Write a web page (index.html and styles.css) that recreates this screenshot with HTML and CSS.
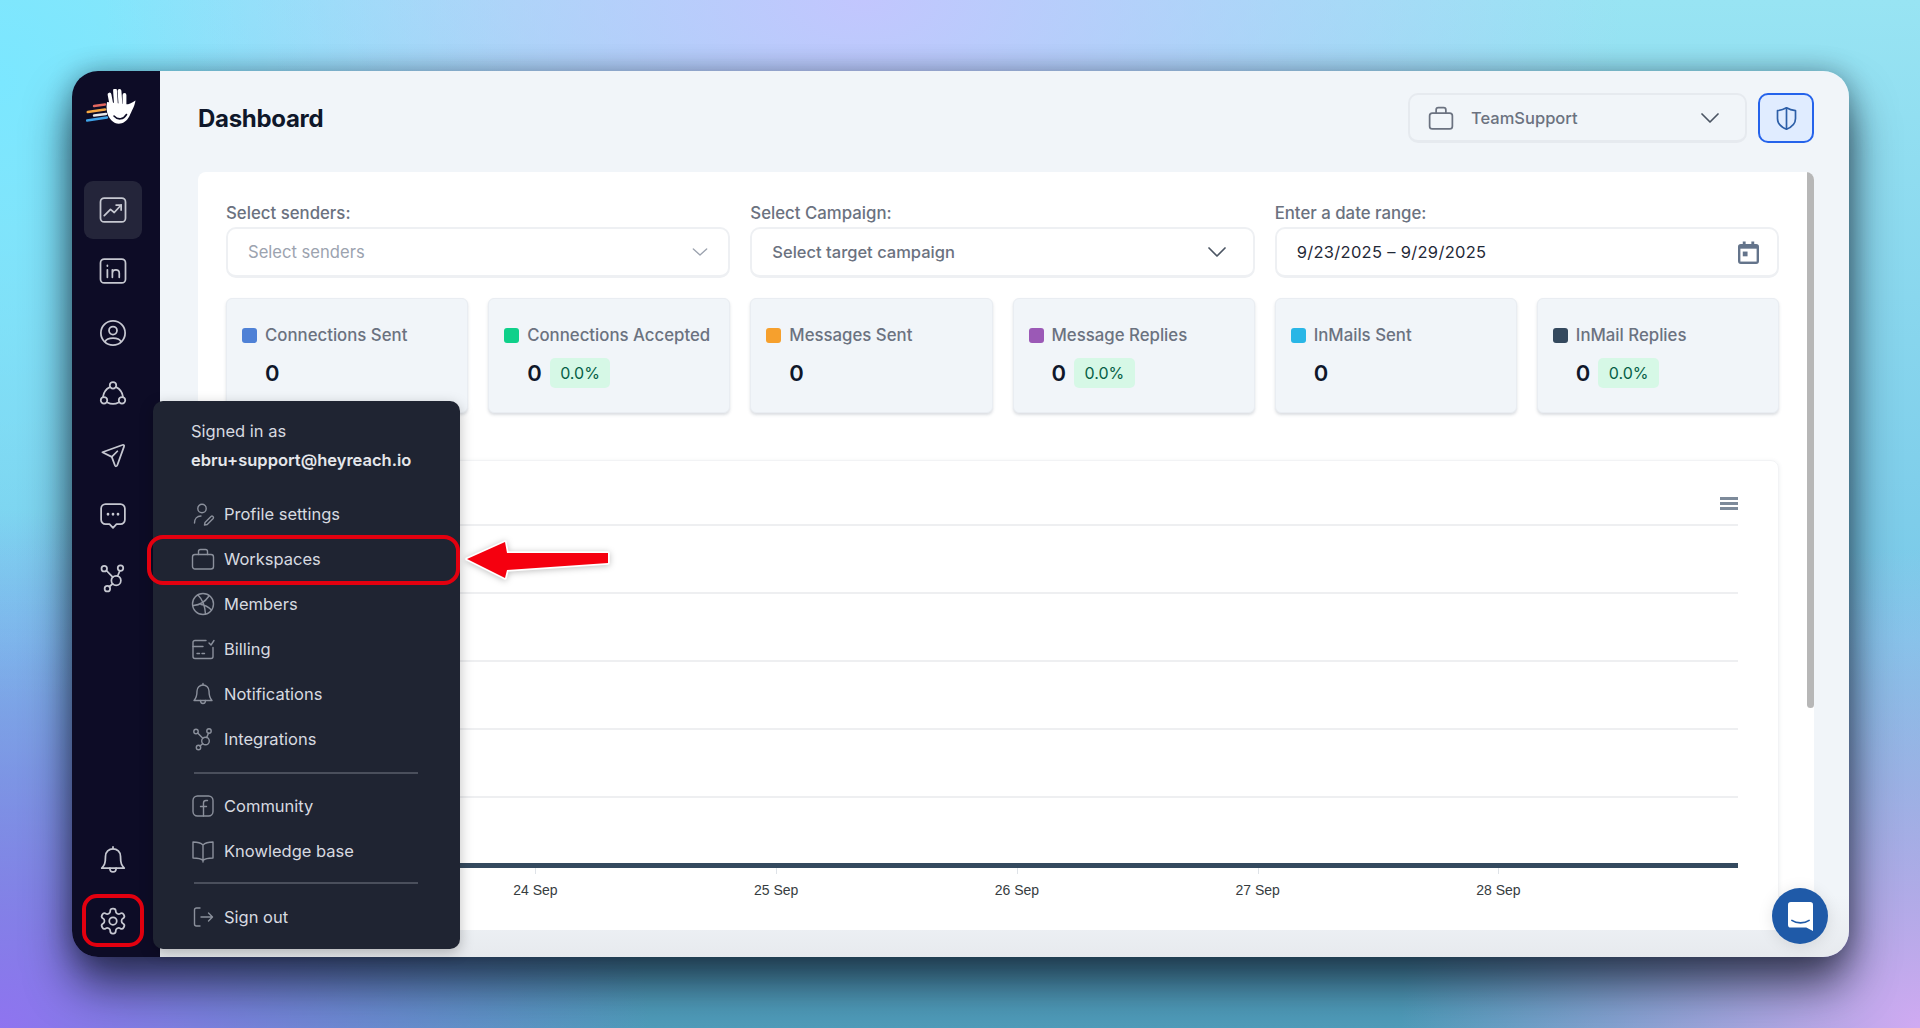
FILE: index.html
```html
<!DOCTYPE html>
<html lang="en">
<head>
<meta charset="UTF-8">
<meta name="viewport" content="width=device-width, initial-scale=1.0">
<title>Dashboard</title>
<link rel="stylesheet" href="styles.css">
</head>
<body>
<div class="window">

  <!-- left rail -->
  <aside class="sidebar">
    <svg class="logo" viewBox="0 0 51 36">
      <g fill="none" stroke-width="2.400" stroke-linecap="round">
        <path d="M8 17 19 15.500" stroke="#e2675f"/>
        <path d="M1.700 23 19 20.500" stroke="#f5a742"/>
        <path d="M8 26.500 20 25" stroke="#e8e8e8"/>
        <path d="M1 31.500 21 28.500" stroke="#3fa3e8"/>
      </g>
      <path d="M21 13 38 15C41 16 44 15 49.500 11.500 48.500 18 45.500 22 43.500 27 40 34 34 36 29 34 24 31 19 25 21 13Z" fill="#fff"/>
      <g stroke="#fff" stroke-width="3.800" stroke-linecap="round">
        <path d="M25.500 16 23.500 5.500"/>
        <path d="M30 16 29 1.500"/>
        <path d="M34.500 16 33.500 2"/>
        <path d="M38.500 17 38.500 6"/>
      </g>
      <path d="M28 27C32 31.500 37.500 30.500 40.500 25.500" fill="none" stroke="#0d0c26" stroke-width="1.600" stroke-linecap="round"/>
    </svg>

    <nav class="rail-nav">
      <a class="rail-item active">
        <svg viewBox="0 0 24 24"><rect x="2" y="2.500" width="20" height="19" rx="3"/><path d="M5 16.500l5-5 3 2.500 5.500-6"/><path d="M14.500 8h4v4"/></svg>
      </a>
      <a class="rail-item">
        <svg viewBox="0 0 24 24"><rect x="2" y="2.500" width="20" height="19" rx="3"/><path d="M7.500 11v6M7.500 7.500v.5M11.500 17v-6M11.500 13.500c0-3 5.500-3.500 5.500 0V17"/></svg>
      </a>
      <a class="rail-item">
        <svg viewBox="0 0 24 24"><circle cx="12" cy="12" r="9.700"/><circle cx="12" cy="10" r="3.200"/><path d="M5.800 18.800c1.500-3.500 10.900-3.500 12.400 0"/></svg>
      </a>
      <a class="rail-item">
        <svg viewBox="0 0 24 24"><circle cx="12" cy="5" r="2.600"/><circle cx="4.800" cy="17" r="2.600"/><circle cx="19.200" cy="17" r="2.600"/><path d="M9.500 6.500C6.500 8 4.500 10.500 4 14.300M14.500 6.500c3 1.500 5 4 5.500 7.800M7.500 18.800c3 1.500 6 1.500 9 0"/></svg>
      </a>
      <a class="rail-item">
        <svg viewBox="0 0 24 24"><path d="M3.500 9.800 19.500 4c1-.4 1.700.3 1.300 1.300L15.500 20c-.5 1.300-1.500 1.300-2 .2L11 13.500Z"/><path d="M11 13.500 15.500 9"/></svg>
      </a>
      <a class="rail-item">
        <svg viewBox="0 0 24 24"><path d="M6 2.500h12a3.500 3.500 0 0 1 3.500 3.500v9a3.500 3.500 0 0 1-3.500 3.500h-3.200L12 21.500l-2.800-3H6A3.500 3.500 0 0 1 2.500 15V6A3.500 3.500 0 0 1 6 2.500z"/><path d="M8 10.500v.1M12 10.500v.1M16 10.500v.1" stroke-width="2.200"/></svg>
      </a>
      <a class="rail-item">
        <svg viewBox="0 0 24 24"><use href="#ic-branch"/></svg>
      </a>
    </nav>

    <div class="rail-bottom">
      <a class="rail-item">
        <svg viewBox="0 0 24 24"><use href="#ic-bell"/></svg>
      </a>
      <a class="rail-item marked">
        <svg viewBox="0 0 24 24"><path d="M12.220 2h-.44a2 2 0 0 0-2 2v.18a2 2 0 0 1-1 1.730l-.43.25a2 2 0 0 1-2 0l-.15-.08a2 2 0 0 0-2.730.73l-.22.38a2 2 0 0 0 .73 2.730l.15.1a2 2 0 0 1 1 1.720v.51a2 2 0 0 1-1 1.740l-.15.09a2 2 0 0 0-.73 2.730l.22.38a2 2 0 0 0 2.730.73l.15-.08a2 2 0 0 1 2 0l.43.25a2 2 0 0 1 1 1.730V20a2 2 0 0 0 2 2h.44a2 2 0 0 0 2-2v-.18a2 2 0 0 1 1-1.730l.43-.25a2 2 0 0 1 2 0l.15.08a2 2 0 0 0 2.730-.73l.22-.39a2 2 0 0 0-.73-2.730l-.15-.08a2 2 0 0 1-1-1.740v-.5a2 2 0 0 1 1-1.740l.15-.09a2 2 0 0 0 .73-2.730l-.22-.38a2 2 0 0 0-2.730-.73l-.15.08a2 2 0 0 1-2 0l-.43-.25a2 2 0 0 1-1-1.730V4a2 2 0 0 0-2-2z"/><circle cx="12" cy="12" r="3"/></svg>
      </a>
    </div>
  </aside>

  <!-- main area -->
  <main class="main">
    <header class="topbar">
      <h1>Dashboard</h1>
      <div class="topbar-right">
        <div class="workspace-select">
          <svg class="ws-icon" viewBox="0 0 24 24"><use href="#ic-case"/></svg>
          <span>TeamSupport</span>
          <svg class="chevron dark" viewBox="0 0 18 10"><path d="M1 1l8 8 8-8"/></svg>
        </div>
        <button class="shield-btn">
          <svg viewBox="0 0 24 24"><path d="M12 2.500c2.500 1.500 5 2.200 8 2.500v7c0 4.500-3 7.500-8 9.500-5-2-8-5-8-9.500V5c3-.3 5.500-1 8-2.500z"/><path d="M12 2.500v19"/></svg>
        </button>
      </div>
    </header>

    <section class="content">
      <div class="filters">
        <div class="field">
          <label>Select senders:</label>
          <div class="select placeholder">
            <span>Select senders</span>
            <svg class="chevron light" viewBox="0 0 18 10"><path d="M1.500 1.500 9 8.500l7.500-7"/></svg>
          </div>
        </div>
        <div class="field">
          <label>Select Campaign:</label>
          <div class="select">
            <span>Select target campaign</span>
            <svg class="chevron dark" viewBox="0 0 18 10"><path d="M1 1l8 8 8-8"/></svg>
          </div>
        </div>
        <div class="field">
          <label>Enter a date range:</label>
          <div class="select date">
            <span>9/23/2025 – 9/29/2025</span>
            <svg class="calendar" viewBox="0 0 22 24"><path d="M3 3h2V0.500h3V3h6V0.500h3V3h2a3 3 0 0 1 3 3v15a3 3 0 0 1-3 3H3a3 3 0 0 1-3-3V6a3 3 0 0 1 3-3z"/><rect x="2.500" y="8" width="17" height="13.500" fill="#fff"/><rect x="5" y="11" width="5" height="5"/></svg>
          </div>
        </div>
      </div>

      <div class="stats">
        <div class="stat">
          <div class="stat-title"><i class="dot blue"></i>Connections Sent</div>
          <div class="stat-value"><b>0</b></div>
        </div>
        <div class="stat">
          <div class="stat-title"><i class="dot green"></i>Connections Accepted</div>
          <div class="stat-value"><b>0</b><span class="pct">0.0%</span></div>
        </div>
        <div class="stat">
          <div class="stat-title"><i class="dot orange"></i>Messages Sent</div>
          <div class="stat-value"><b>0</b></div>
        </div>
        <div class="stat">
          <div class="stat-title"><i class="dot purple"></i>Message Replies</div>
          <div class="stat-value"><b>0</b><span class="pct">0.0%</span></div>
        </div>
        <div class="stat">
          <div class="stat-title"><i class="dot cyan"></i>InMails Sent</div>
          <div class="stat-value"><b>0</b></div>
        </div>
        <div class="stat">
          <div class="stat-title"><i class="dot navy"></i>InMail Replies</div>
          <div class="stat-value"><b>0</b><span class="pct">0.0%</span></div>
        </div>
      </div>

      <div class="chart-card">
        <div class="chart-menu"><i></i><i></i><i></i></div>
        <div class="chart-grid">
          <div></div><div></div><div></div><div></div><div></div>
        </div>
        <div class="chart-axis"></div>
        <div class="chart-labels">
          <span>24 Sep</span><span>25 Sep</span><span>26 Sep</span><span>27 Sep</span><span>28 Sep</span>
        </div>
      </div>

      <div class="scrollbar"></div>
    </section>
  </main>

  <!-- account popup -->
  <div class="account-menu">
    <div class="account-head">
      <div>Signed in as</div>
      <div class="email">ebru+support@heyreach.io</div>
    </div>
    <a class="menu-item">
      <svg viewBox="0 0 24 24"><circle cx="11" cy="6.500" r="4.200"/><path d="M3.500 21c0-4 2.500-7 6.500-7"/><path d="M14 20.500l6-6a1.500 1.500 0 0 1 2.200 2l-6 6-2.700.5z"/></svg>
      Profile settings
    </a>
    <a class="menu-item marked">
      <svg viewBox="0 0 24 24"><use href="#ic-case"/></svg>
      Workspaces
    </a>
    <a class="menu-item">
      <svg viewBox="0 0 24 24"><circle cx="12" cy="12" r="10.500"/><path d="M7 3c4 4 7 10 7.500 19M18 4c-4 6-9 9-15.500 9.500M10 12.500c4 .5 8 3 10.500 5.500"/></svg>
      Members
    </a>
    <a class="menu-item">
      <svg viewBox="0 0 24 24"><path d="M15 3.500H4a2 2 0 0 0-2 2v14a2 2 0 0 0 2 2h16a2 2 0 0 0 2-2v-9"/><path d="M2 9.500h10M18 6l2 2 3-4.500M6 16.500h2.500M11 16.500h2.500"/></svg>
      Billing
    </a>
    <a class="menu-item">
      <svg viewBox="0 0 24 24"><use href="#ic-bell"/></svg>
      Notifications
    </a>
    <a class="menu-item">
      <svg viewBox="0 0 24 24"><use href="#ic-branch"/></svg>
      Integrations
    </a>
    <hr class="menu-line first">
    <a class="menu-item">
      <svg viewBox="0 0 24 24"><rect x="2" y="2" width="20" height="20" rx="4.500"/><path d="M16.500 6.500H15c-1.500 0-2.500 1-2.500 2.500v13M9.500 12.500h6"/></svg>
      Community
    </a>
    <a class="menu-item">
      <svg viewBox="0 0 24 24"><path d="M12 6c-2-2-5-3-10-3v16c5 0 8 .5 10 2.500 2-2 5-2.500 10-2.500V3c-5 0-8 1-10 3zM12 6v17"/></svg>
      Knowledge base
    </a>
    <hr class="menu-line second">
    <a class="menu-item">
      <svg viewBox="0 0 24 24"><path d="M9 3H5.500A2 2 0 0 0 3.500 5v14a2 2 0 0 0 2 2H9M10 12h11M17.500 8l4 4-4 4"/></svg>
      Sign out
    </a>
  </div>

  <!-- annotation arrow -->
  <svg class="arrow" viewBox="0 0 156 50">
    <polygon points="7,24 45,7 47,18 148,18 148,28 47,35 45,43"/>
  </svg>

  <button class="chat-btn">
    <svg viewBox="0 0 26 30"><path d="M3 0h20a3 3 0 0 1 3 3v27l-7-3.500H3a3 3 0 0 1-3-3V3a3 3 0 0 1 3-3z" fill="#fff"/><path d="M4 19c5 3.500 13 3.500 18 0" fill="none" stroke="#1f5aa8" stroke-width="1.600" stroke-linecap="round"/></svg>
  </button>
</div>

<!-- shared icons -->
<svg class="defs" width="0" height="0">
  <symbol id="ic-case" viewBox="0 0 24 24">
    <rect x="1.500" y="7.500" width="21" height="14.500" rx="2.500"/>
    <path d="M7.500 7.500V4.500a2 2 0 0 1 2-2h5a2 2 0 0 1 2 2v3"/>
  </symbol>
  <symbol id="ic-bell" viewBox="0 0 24 24">
    <path d="M6 9a6 6 0 0 1 12 0c0 6 1 7.500 3 9.500H3c2-2 3-3.500 3-9.500"/>
    <path d="M9.500 18.500c0 4 5 4 5 0M12 3V1.500"/>
  </symbol>
  <symbol id="ic-branch" viewBox="0 0 24 24">
    <circle cx="14.500" cy="14" r="3.800"/>
    <circle cx="5" cy="4.500" r="2.200"/>
    <circle cx="18" cy="4" r="2.200"/>
    <circle cx="7.500" cy="20.500" r="2.200"/>
    <path d="M6.700 6 11.800 11.300M17.500 6.200 15.700 10.400M9 19l2.800-2.400"/>
  </symbol>
</svg>
</body>
</html>
```

FILE: styles.css
```css
* {
box-sizing: border-box;
}
body {
margin: 0;
height: 1028px;
padding: 71px 71px 71px 72px;
overflow: hidden;
font-family: Inter, "Noto Sans", sans-serif;
font-size: 16.5px;
background:
  radial-gradient(650px 520px at 0 100%, #8f74f0, transparent),
  radial-gradient(520px 480px at 100% 100%, #d0aaf2, transparent),
  radial-gradient(760px 420px at 45% 0, #c2c6fe, transparent),
  radial-gradient(520px 620px at 0 8%, #7be7ff, transparent),
  linear-gradient(180deg, #98e4f3 0%, #78c8e8 62%, #4f9dbb 100%);
}
svg {
display: block;
}
.defs {
position: absolute;
}

.window {
position: relative;
display: flex;
height: 886px;
border-radius: 26px;
box-shadow: 0 28px 46px rgba(8, 14, 28, 0.68), 0 0 26px rgba(8, 14, 28, 0.3);
}

/* sidebar */
.sidebar {
width: 88px;
flex-shrink: 0;
display: flex;
flex-direction: column;
padding: 18px 0 7px 12px;
background: #0d0c26;
border-radius: 26px 0 0 26px;
}
.logo {
width: 51px;
height: 36px;
margin: 0 0 56px 2px;
}
.rail-nav, .rail-bottom {
display: flex;
flex-direction: column;
gap: 3.3px;
}
.rail-bottom {
margin-top: auto;
}
.rail-item {
position: relative;
width: 58px;
height: 58px;
display: flex;
align-items: center;
justify-content: center;
border-radius: 9px;
}
.rail-item svg {
width: 30px;
height: 30px;
fill: none;
stroke: #c6c8d1;
stroke-width: 1.400;
stroke-linecap: round;
stroke-linejoin: round;
}
.rail-item.active {
background: #24253a;
}
.rail-item.marked::after {
content: "";
position: absolute;
left: -2px;
right: -2px;
top: 2px;
bottom: 3px;
border: 4px solid #e3000f;
border-radius: 15px;
}

/* main */
.main {
flex: 1;
min-width: 0;
display: flex;
flex-direction: column;
padding: 22px 35px 27px 38px;
background: linear-gradient(180deg, #f1f5f9 93%, #e7eaee 100%);
border-radius: 0 26px 26px 0;
}
.topbar {
height: 50px;
margin-bottom: 29px;
display: flex;
align-items: center;
justify-content: space-between;
flex-shrink: 0;
}
h1 {
margin: 0;
font-size: 24px;
font-weight: 700;
letter-spacing: -0.3px;
color: #0f172a;
}
.topbar-right {
display: flex;
gap: 11px;
}
.workspace-select {
width: 339px;
height: 50px;
display: flex;
align-items: center;
padding: 0 26px 0 18px;
border: 2px solid #e6eaef;
border-bottom-width: 3px;
border-radius: 10px;
color: #6b7280;
font-weight: 500;
}
.workspace-select span {
flex: 1;
}
.ws-icon {
width: 26px;
height: 26px;
margin-right: 17px;
fill: none;
stroke: #6b7280;
stroke-width: 1.600;
}
.chevron {
width: 18px;
height: 10px;
fill: none;
stroke-width: 1.700;
stroke-linecap: round;
stroke-linejoin: round;
}
.chevron.dark {
stroke: #4b5563;
}
.chevron.light {
width: 16px;
stroke: #9ca3af;
stroke-width: 1.500;
}
.shield-btn {
width: 56px;
height: 50px;
display: flex;
align-items: center;
justify-content: center;
padding: 0;
background: #e0ecff;
border: 2px solid #2563eb;
border-radius: 10px;
}
.shield-btn svg {
width: 27px;
height: 27px;
fill: none;
stroke: #2d5fa8;
stroke-width: 1.500;
stroke-linejoin: round;
}

/* white panel */
.content {
position: relative;
flex: 1;
min-height: 0;
overflow: hidden;
padding: 29px 35px 0 28px;
background: #fff;
border-radius: 8px 8px 0 0;
}
.filters {
display: grid;
grid-template-columns: repeat(3, 1fr);
gap: 20px;
}
.field label {
display: block;
height: 26px;
line-height: 25px;
font-size: 16.8px;
color: #6b7280;
font-weight: 500;
}
.select {
height: 51px;
display: flex;
align-items: center;
justify-content: space-between;
padding: 0 27px 0 20px;
border: 2px solid #eef0f3;
border-bottom-width: 3px;
border-radius: 10px;
color: #6b7280;
font-weight: 500;
}
.select.placeholder {
padding-right: 20px;
color: #9ca3af;
font-weight: 400;
font-size: 16.6px;
}
.select.date {
color: #1f2937;
font-weight: 400;
letter-spacing: 0.3px;
padding-right: 18px;
}
.calendar {
width: 21px;
height: 23px;
fill: #64748b;
}

.stats {
display: grid;
grid-template-columns: repeat(6, 1fr);
gap: 20px;
margin-top: 20px;
}
.stat {
height: 115px;
padding: 24px 6px 0 15px;
background: #f1f5f9;
border: 1px solid #e9edf2;
border-radius: 6px;
box-shadow: 0 2px 3px rgba(90, 105, 125, 0.22);
}
.stat-title {
display: flex;
align-items: center;
height: 24px;
font-size: 16.8px;
color: #6b7280;
font-weight: 500;
white-space: nowrap;
}
.dot {
width: 15px;
height: 15px;
margin-right: 8px;
border-radius: 3px;
flex-shrink: 0;
}
.dot.blue { background: #4f81d6; }
.dot.green { background: #0fd08a; }
.dot.orange { background: #f6a02d; }
.dot.purple { background: #9b59b6; }
.dot.cyan { background: #29b6e6; }
.dot.navy { background: #34495e; }
.stat-value {
display: flex;
align-items: center;
gap: 8px;
height: 30px;
margin: 11px 0 0 23px;
}
.stat-value b {
font-size: 22px;
font-weight: 600;
color: #0f172a;
}
.pct {
height: 30px;
line-height: 31px;
padding: 0 10.500px;
font-size: 16px;
background: #d6f8e6;
border-radius: 5px;
color: #065f46;
}

/* chart */
.chart-card {
height: 480px;
margin-top: 47px;
padding: 36px 40px 0 68px;
border: 1px solid #f2f3f5;
border-radius: 8px 8px 0 0;
box-shadow: 0 1px 4px rgba(90, 105, 125, 0.12);
}
.chart-menu {
display: flex;
flex-direction: column;
gap: 2.500px;
width: 18px;
margin: 0 0 14px auto;
}
.chart-menu i {
height: 2.500px;
background: #7d8a9a;
}
.chart-grid div {
height: 68px;
border-top: 2px solid #eeeff1;
}
.chart-axis {
height: 5px;
margin-top: -1px;
background: #34495e;
}
.chart-labels {
display: flex;
padding-left: 120px;
}
.chart-labels span {
position: relative;
width: 240.750px;
padding-top: 14px;
text-align: center;
font-family: "Liberation Sans", Arial, sans-serif;
font-size: 14px;
color: #373d3f;
}
.chart-labels span::before {
content: "";
position: absolute;
top: 0;
left: 50%;
width: 1px;
height: 6px;
background: #dfe3e8;
}
.scrollbar {
position: absolute;
top: 0;
right: 0;
width: 7px;
height: 536px;
background: #b7b7b7;
border-radius: 0 0 4px 4px;
}

/* account popup */
.account-menu {
position: absolute;
left: 81px;
top: 330px;
width: 307px;
height: 548px;
background: #1f2432;
border-radius: 10px;
color: #d7dae0;
box-shadow: 0 4px 14px rgba(0, 0, 0, 0.25);
}
.account-head {
height: 90px;
padding: 18px 0 0 38px;
line-height: 24px;
}
.email {
margin-top: 5px;
font-weight: 600;
color: #e5e7eb;
}
.menu-item {
position: relative;
height: 45px;
display: flex;
align-items: center;
gap: 9px;
padding-left: 38px;
}
.menu-item svg {
width: 24px;
height: 24px;
fill: none;
stroke: #8b909c;
stroke-width: 1.400;
stroke-linecap: round;
stroke-linejoin: round;
}
.menu-item.marked::after {
content: "";
position: absolute;
left: -6px;
right: 0;
top: -1px;
bottom: -4px;
border: 4px solid #e3000f;
border-radius: 16px;
}
.menu-line {
width: 224px;
height: 2px;
margin: 0 0 0 41px;
background: #4a4f5c;
border: 0;
}
.menu-line.first {
margin-top: 11px;
margin-bottom: 9px;
}
.menu-line.second {
margin-top: 9px;
margin-bottom: 10px;
}

/* overlays */
.arrow {
position: absolute;
left: 388px;
top: 464px;
width: 156px;
height: 50px;
overflow: visible;
filter: drop-shadow(0 1px 3px rgba(0, 0, 0, 0.25));
}
.arrow polygon {
fill: #f5000f;
stroke: #fff;
stroke-width: 3.500;
stroke-linejoin: round;
paint-order: stroke;
}
.chat-btn {
position: absolute;
right: 21px;
bottom: 13px;
width: 56px;
height: 56px;
display: flex;
align-items: center;
justify-content: center;
padding: 0;
background: #1f5aa8;
border: 0;
border-radius: 50%;
box-shadow: 0 2px 16px rgba(0, 0, 0, 0.1);
}
.chat-btn svg {
width: 25px;
height: 29px;
}
```
